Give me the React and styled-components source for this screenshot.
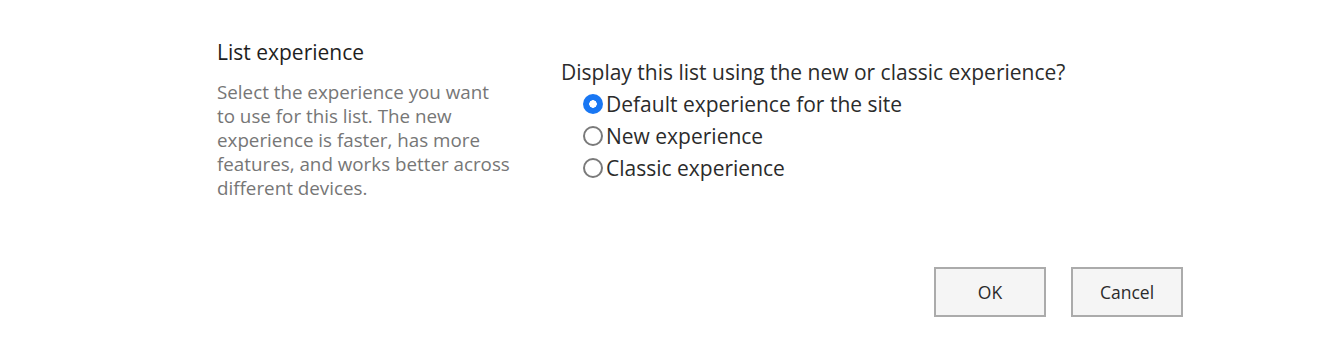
import React, { useState } from "react";
import styled, { createGlobalStyle } from "styled-components";

const Global = createGlobalStyle`
  html, body { margin: 0; padding: 0; background: #ffffff; }
  body { font-family: "Open Sans", "Liberation Sans", sans-serif; }
`;

const Page = styled.div`
  width: 1326px;
  height: 358px;
  box-sizing: border-box;
  padding: 38px 143px 0 217px;
  display: flex;
  flex-direction: column;
`;

const Section = styled.div`
  display: flex;
  align-items: flex-start;
`;

const LeftCol = styled.div`
  width: 296px;
  margin-right: 48px;
`;

const Heading = styled.h3`
  margin: 0;
  font-size: 21px;
  line-height: 28px;
  font-weight: 400;
  color: #1e1e1e;
`;

const Description = styled.p`
  margin: 14px 0 0;
  font-size: 18.8px;
  line-height: 24px;
  color: #767676;
  white-space: nowrap;
`;

const RightCol = styled.div`
  padding-top: 20px;
`;

const Question = styled.div`
  font-size: 21px;
  line-height: 28px;
  color: #2b2b2b;
`;

const RadioList = styled.div`
  display: flex;
  flex-direction: column;
  padding-left: 22px;
  margin-top: 2px;
`;

const RadioRow = styled.label`
  display: flex;
  align-items: center;
  height: 32px;
  font-size: 21px;
  color: #2b2b2b;
  cursor: pointer;
`;

const RadioInput = styled.input`
  appearance: none;
  -webkit-appearance: none;
  margin: 0 3px 0 0;
  width: 20px;
  height: 20px;
  border-radius: 50%;
  box-sizing: border-box;
  border: 2px solid #7a7a7a;
  background: #ffffff;
  flex: none;
  &:checked {
    border: none;
    background: radial-gradient(circle, #ffffff 0 3.5px, #1977f3 4px);
  }
`;

const ButtonRow = styled.div`
  display: flex;
  justify-content: flex-end;
  gap: 25px;
  margin-top: 67px;
`;

const Button = styled.button`
  width: 112px;
  height: 50px;
  box-sizing: border-box;
  border: 2px solid #ababab;
  background: #f5f5f5;
  color: #2b2b2b;
  font-family: "Open Sans", "Liberation Sans", sans-serif;
  font-size: 17.5px;
  cursor: pointer;
  padding: 0;
`;

const options = [
  { id: "default", label: "Default experience for the site" },
  { id: "new", label: "New experience" },
  { id: "classic", label: "Classic experience" },
];

export default function App() {
  const [value, setValue] = useState("default");
  return (
    <>
      <Global />
      <Page>
        <Section>
          <LeftCol>
            <Heading>List experience</Heading>
            <Description>
              Select the experience you want
              <br />
              to use for this list. The new
              <br />
              experience is faster, has more
              <br />
              features, and works better across
              <br />
              different devices.
            </Description>
          </LeftCol>
          <RightCol>
            <Question>Display this list using the new or classic experience?</Question>
            <RadioList>
              {options.map((o) => (
                <RadioRow key={o.id}>
                  <RadioInput
                    type="radio"
                    name="exp"
                    checked={value === o.id}
                    onChange={() => setValue(o.id)}
                  />
                  {o.label}
                </RadioRow>
              ))}
            </RadioList>
          </RightCol>
        </Section>
        <ButtonRow>
          <Button>OK</Button>
          <Button>Cancel</Button>
        </ButtonRow>
      </Page>
    </>
  );
}
